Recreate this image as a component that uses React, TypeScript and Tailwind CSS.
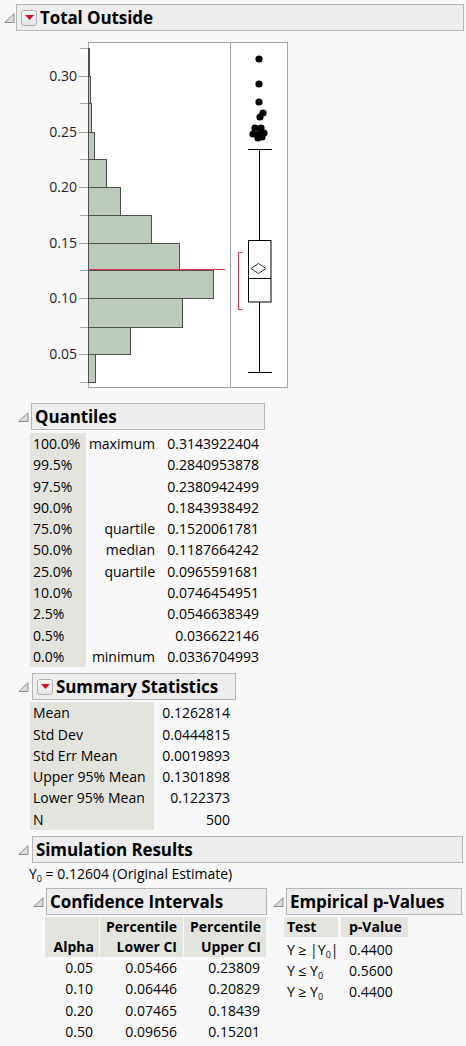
import React from 'react';

const font = { fontFamily: '"Open Sans", "Noto Sans", sans-serif' };

function Disclosure() {
  return (
    <svg width="11" height="10" viewBox="0 0 11 10" className="shrink-0">
      <polygon points="10,0.8 10,9.5 0.8,9.5" fill="#dcdcdc" stroke="#8c8c8c" strokeWidth="1" />
    </svg>
  );
}

function RedMenu() {
  return (
    <span className="w-[16px] h-[16px] shrink-0 rounded-[3px] border border-[#b0b0b0] bg-gradient-to-b from-[#fbfbfb] to-[#e4e4e4] flex items-center justify-center">
      <svg width="9" height="5" viewBox="0 0 9 5">
        <polygon points="0,0 9,0 4.5,5" fill="#d1121c" />
      </svg>
    </span>
  );
}

function Header({ title, menu, className }: { title: string; menu?: boolean; className: string }) {
  return (
    <div className={`h-[27px] border border-[#b5b5b5] bg-[#ededed] flex items-center gap-[3px] pl-[3px] ${className}`}>
      {menu && <RedMenu />}
      <span className="text-[17px] font-bold text-black leading-none tracking-[-0.1px] whitespace-nowrap">{title}</span>
    </div>
  );
}

const bars: [number, number, number][] = [
  [382, 354, 95],
  [354, 327, 130],
  [327, 298, 182],
  [298, 270, 213],
  [270, 243, 179],
  [243, 215, 151],
  [215, 187, 120],
  [187, 159, 106],
  [159, 132, 94],
  [132, 103, 91],
  [103, 76, 90],
  [76, 48, 89],
];

const majors: [number, string][] = [
  [76, '0.30'],
  [132, '0.25'],
  [187, '0.20'],
  [243, '0.15'],
  [298, '0.10'],
  [354, '0.05'],
];
const minors = [48, 103, 159, 215, 270, 327, 382];

const dots: [number, number][] = [
  [259, 59],
  [259, 84],
  [259, 102],
  [263, 113],
  [260, 117],
  [255, 128],
  [261, 128],
  [253, 134],
  [259, 134],
  [264, 133],
  [258, 138],
  [262, 137],
];

function Chart() {
  return (
    <svg width="300" height="357" viewBox="0 36 300 357" className="block">
      <rect x="88.5" y="42.5" width="199" height="345" fill="#ffffff" stroke="#a3a3a3" />
      {bars.map(([b, t, r], i) => (
        <rect key={i} x="88.5" y={t + 0.5} width={r - 88} height={b - t} fill="#bccabc" stroke="#4b524a" strokeWidth="1" />
      ))}
      <line x1="88" y1="269.5" x2="225" y2="269.5" stroke="#e0314a" strokeWidth="1" />
      <line x1="230.5" y1="42" x2="230.5" y2="388" stroke="#a3a3a3" />
      {majors.map(([y, l]) => (
        <g key={l}>
          <line x1="79" y1={y + 0.5} x2="88" y2={y + 0.5} stroke="#a3a3a3" />
          <text x="77" y={y + 5} textAnchor="end" fontSize="14" fill="#1c1c2e" style={font}>
            {l}
          </text>
        </g>
      ))}
      {minors.map((y) => (
        <line key={y} x1="80" y1={y + 0.5} x2="88" y2={y + 0.5} stroke="#a3a3a3" />
      ))}
      {/* box plot */}
      <line x1="259.5" y1="149" x2="259.5" y2="240" stroke="#000" />
      <line x1="259.5" y1="302" x2="259.5" y2="372" stroke="#000" />
      <line x1="248" y1="149.5" x2="272" y2="149.5" stroke="#000" />
      <line x1="248" y1="372.5" x2="272" y2="372.5" stroke="#000" />
      <rect x="248.5" y="240.5" width="22.5" height="61.5" fill="#ffffff" stroke="#000" />
      <line x1="248.5" y1="278.5" x2="271" y2="278.5" stroke="#000" />
      <polygon points="251,268.5 258.5,263.5 266,268.5 258.5,273.5" fill="none" stroke="#333" />
      <polyline points="242.5,252.5 238.5,252.5 238.5,309.5 242.5,309.5" fill="none" stroke="#e0314a" />
      {dots.map(([x, y], i) => (
        <circle key={i} cx={x} cy={y} r="3.6" fill="#000" />
      ))}
    </svg>
  );
}

const quantiles: [string, string, string][] = [
  ['100.0%', 'maximum', '0.3143922404'],
  ['99.5%', '', '0.2840953878'],
  ['97.5%', '', '0.2380942499'],
  ['90.0%', '', '0.1843938492'],
  ['75.0%', 'quartile', '0.1520061781'],
  ['50.0%', 'median', '0.1187664242'],
  ['25.0%', 'quartile', '0.0965591681'],
  ['10.0%', '', '0.0746454951'],
  ['2.5%', '', '0.0546638349'],
  ['0.5%', '', '0.036622146'],
  ['0.0%', 'minimum', '0.0336704993'],
];

const summary: [string, string][] = [
  ['Mean', '0.1262814'],
  ['Std Dev', '0.0444815'],
  ['Std Err Mean', '0.0019893'],
  ['Upper 95% Mean', '0.1301898'],
  ['Lower 95% Mean', '0.122373'],
  ['N', '500'],
];

const ci: [string, string, string][] = [
  ['0.05', '0.05466', '0.23809'],
  ['0.10', '0.06446', '0.20829'],
  ['0.20', '0.07465', '0.18439'],
  ['0.50', '0.09656', '0.15201'],
];

function Y0() {
  return (
    <>
      Y<span className="text-[9px] leading-none relative top-[3px]">0</span>
    </>
  );
}

export default function App() {
  return (
    <div className="w-[466px] h-[1046px] bg-[#f8f8f8] text-black text-[14px] overflow-hidden" style={font}>
      <div className="pt-[4px] flex items-center">
        <div className="w-[16px] pl-[4px]">
          <Disclosure />
        </div>
        <Header title="Total Outside" menu className="w-[448px] pl-[4px]" />
      </div>

      <div className="mt-[5px]">
        <Chart />
      </div>

      {/* Quantiles */}
      <div className="mt-[10px] flex items-center">
        <div className="w-[31px] pl-[18px]">
          <Disclosure />
        </div>
        <Header title="Quantiles" className="w-[234px]" />
      </div>
      <div className="mt-[3px] ml-[30px] flex leading-[21.3px]">
        <div className="w-[56px] bg-[#e4e4df] pl-[3px]">
          {quantiles.map((q) => (
            <div key={q[0]}>{q[0]}</div>
          ))}
        </div>
        <div className="w-[69px] text-right">
          {quantiles.map((q, i) => (
            <div key={i} className="h-[21.3px]">{q[1]}</div>
          ))}
        </div>
        <div className="w-[104px] text-right">
          {quantiles.map((q) => (
            <div key={q[2]}>{q[2]}</div>
          ))}
        </div>
      </div>

      {/* Summary Statistics */}
      <div className="mt-[6px] flex items-center">
        <div className="w-[32px] pl-[18px]">
          <Disclosure />
        </div>
        <Header title="Summary Statistics" menu className="w-[204px] pl-[4px]" />
      </div>
      <div className="mt-[2px] ml-[30px] flex leading-[21.3px]">
        <div className="w-[124px] bg-[#e4e4df] pl-[3px]">
          {summary.map((s) => (
            <div key={s[0]}>{s[0]}</div>
          ))}
        </div>
        <div className="w-[76px] text-right">
          {summary.map((s) => (
            <div key={s[0]}>{s[1]}</div>
          ))}
        </div>
      </div>

      {/* Simulation Results */}
      <div className="mt-[6px] flex items-center">
        <div className="w-[32px] pl-[18px]">
          <Disclosure />
        </div>
        <Header title="Simulation Results" className="w-[431px]" />
      </div>
      <div className="ml-[29px] h-[22px] leading-[22px]">
        <Y0 /> = 0.12604 (Original Estimate)
      </div>

      <div className="mt-[3px] flex items-start">
        {/* Confidence Intervals */}
        <div className="w-[273px]">
          <div className="flex items-center">
            <div className="w-[46px] pl-[33px]">
              <Disclosure />
            </div>
            <Header title="Confidence Intervals" className="w-[221px]" />
          </div>
          <div className="mt-[2px] ml-[45px] w-[221px]">
            <div className="flex gap-[1px] font-bold leading-[20px]">
              <div className="w-[54px] h-[40px] bg-[#e4e4df] flex items-end justify-end pr-[5px]">Alpha</div>
              <div className="w-[83px] h-[40px] bg-[#e4e4df] text-right pr-[6px]">
                Percentile
                <br />
                Lower CI
              </div>
              <div className="w-[82px] h-[40px] bg-[#e4e4df] text-right pr-[5px]">
                Percentile
                <br />
                Upper CI
              </div>
            </div>
            {ci.map((r) => (
              <div key={r[0]} className="flex gap-[1px] leading-[21.3px]">
                <div className="w-[54px] text-right pr-[6px]">{r[0]}</div>
                <div className="w-[83px] text-right pr-[6px]">{r[1]}</div>
                <div className="w-[82px] text-right pr-[6px]">{r[2]}</div>
              </div>
            ))}
          </div>
        </div>

        {/* Empirical p-Values */}
        <div className="w-[190px]">
          <div className="flex items-center">
            <div className="w-[13px]">
              <Disclosure />
            </div>
            <Header title="Empirical p-Values" className="w-[176px]" />
          </div>
          <div className="mt-[2px] ml-[11px]">
            <div className="flex gap-[3px] font-bold leading-[20px]">
              <div className="w-[54px] bg-[#e4e4df] pl-[3px]">Test</div>
              <div className="w-[67px] bg-[#e4e4df] pl-[8px]">p-Value</div>
            </div>
            <div className="mt-[2px]">
              {[
                [<>Y ≥ |<Y0 />|</>, '0.4400'],
                [<>Y ≤ <Y0 /></>, '0.5600'],
                [<>Y ≥ <Y0 /></>, '0.4400'],
              ].map((r, i) => (
                <div key={i} className="flex gap-[3px] h-[21px] leading-[21px]">
                  <div className="w-[54px] pl-[3px] whitespace-nowrap">{r[0]}</div>
                  <div className="w-[67px] pl-[8px]">{r[1]}</div>
                </div>
              ))}
            </div>
          </div>
        </div>
      </div>
    </div>
  );
}
